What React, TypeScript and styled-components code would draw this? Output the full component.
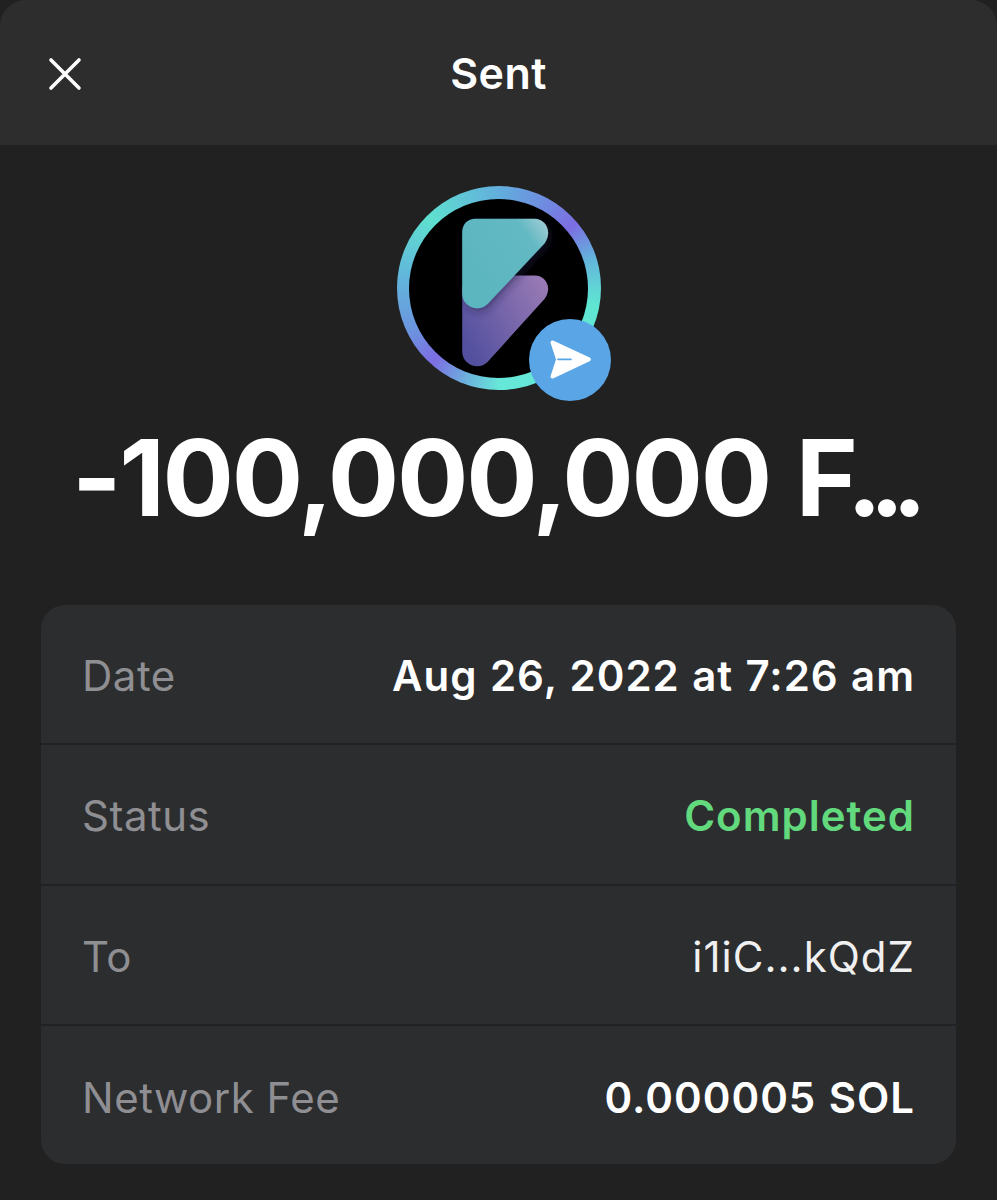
import React from 'react';
import styled, { createGlobalStyle } from 'styled-components';

const rows = [
  { label: 'Date', value: 'Aug 26, 2022 at 7:26 am', tone: 'white' },
  { label: 'Status', value: 'Completed', tone: 'green' },
  { label: 'To', value: 'i1iC...kQdZ', tone: 'plain' },
  { label: 'Network Fee', value: '0.000005 SOL', tone: 'white' },
];

const App: React.FC = () => {
  return (
    <>
      <GlobalStyle />
      <Page>
        <TopStrip />
        <Header>
          <CloseButton>
            <svg width="34" height="34" viewBox="0 0 34 34" fill="none">
              <path d="M3 3L31 31M31 3L3 31" stroke="#fff" strokeWidth="3.6" strokeLinecap="round" />
            </svg>
          </CloseButton>
          <Title>Sent</Title>
        </Header>
        <Body>
          <TokenIcon>
            <TokenRing>
              <TokenCore>
                <TokenMark />
              </TokenCore>
            </TokenRing>
            <SendBadge>
              <svg width="82" height="82" viewBox="0 0 82 82">
                <path
                  d="M21.6 24C21.2 22 22.8 21 24.6 21.8L60.6 38.6C62.4 39.5 62.4 41.5 60.6 42.3L24.6 59.2C22.8 60 21.2 59 21.6 57L27 40.4Z"
                  fill="#fff"
                />
                <path d="M29 40.4H42" stroke="#5aa5e6" strokeWidth="1.6" strokeLinecap="round" />
              </svg>
            </SendBadge>
          </TokenIcon>
          <Amount>
            -100,000,000 <TightLetter>F</TightLetter>
            <Dots>...</Dots>
          </Amount>
          <DetailCard>
            {rows.map((row) => (
              <DetailRow key={row.label}>
                <Label>{row.label}</Label>
                <Value $tone={row.tone}>{row.value}</Value>
              </DetailRow>
            ))}
          </DetailCard>
        </Body>
      </Page>
    </>
  );
};

// the F mark, coordinates measured from the icon box
const TokenMark = () => (
  <svg width="179" height="179" viewBox="12.5 12.5 179 179">
    <defs>
      <linearGradient id="blade" x1="0.2" y1="0.6" x2="1" y2="0">
        <stop offset="0" stopColor="#5cb6c0" />
        <stop offset="0.7" stopColor="#64b9c3" />
        <stop offset="1" stopColor="#a9d0d8" />
      </linearGradient>
      <linearGradient id="lower" x1="0" y1="0.7" x2="1" y2="0.1">
        <stop offset="0" stopColor="#53509f" />
        <stop offset="1" stopColor="#9a7bb5" />
      </linearGradient>
      <filter id="bladeShadow" x="-20%" y="-20%" width="140%" height="140%">
        <feDropShadow dx="2" dy="3" stdDeviation="4" floodColor="#1d1d4a" floodOpacity="0.55" />
      </filter>
    </defs>
    <path
      d="M65.7 100H90L105 89H138C150 89 156 102 148 112.5L91 175.5C83 184 65.7 179 65.7 165Z"
      fill="url(#lower)"
    />
    <path
      d="M65.7 46C65.7 38 71 32.3 79 32.3H138C150 32.3 156 46 148 57L91 117.5C83 126 65.7 121 65.7 107Z"
      fill="url(#blade)"
      filter="url(#bladeShadow)"
    />
  </svg>
);

const GlobalStyle = createGlobalStyle`
  html, body {
    margin: 0;
    background: #212121;
  }
  * {
    box-sizing: border-box;
  }
`;

const Page = styled.div`
  width: 997px;
  height: 1200px;
  overflow: hidden;
  display: flex;
  flex-direction: column;
  background: #212121;
  font-family: Inter, "Liberation Sans", sans-serif;
`;

const TopStrip = styled.div`
  position: absolute;
  top: 0;
  left: 20px;
  width: 957px;
  height: 2px;
  background: #262626;
`;

const Header = styled.header`
  position: relative;
  height: 145px;
  flex-shrink: 0;
  display: flex;
  align-items: center;
  justify-content: center;
  background: #2d2d2d;
  border-radius: 26px 26px 0 0;
`;

const CloseButton = styled.div`
  position: absolute;
  left: 48px;
  top: 57px;
  width: 34px;
  height: 34px;
  display: flex;
`;

const Title = styled.h1`
  margin: 0;
  font-size: 43px;
  font-weight: 600;
  letter-spacing: 0.4px;
  color: #fff;
`;

const Body = styled.main`
  flex: 1;
  display: flex;
  flex-direction: column;
  align-items: center;
  padding: 41px 41px 0;
`;

const TokenIcon = styled.div`
  position: relative;
  width: 204px;
  height: 204px;
  flex-shrink: 0;
`;

const TokenRing = styled.div`
  width: 100%;
  height: 100%;
  padding: 12.5px;
  border-radius: 50%;
  background: conic-gradient(
    #62aedd 0deg,
    #6f8ce0 28deg,
    #7c6de2 50deg,
    #64b4dc 72deg,
    #5fe6d2 100deg,
    #66e8d8 180deg,
    #6bb6dc 198deg,
    #7c6de2 222deg,
    #6b96de 245deg,
    #62b4dc 275deg,
    #5fe0cf 315deg,
    #62aedd 360deg
  );
`;

const TokenCore = styled.div`
  width: 179px;
  height: 179px;
  border-radius: 50%;
  background: #000;
  overflow: hidden;
`;

const SendBadge = styled.div`
  position: absolute;
  left: 132px;
  top: 133px;
  width: 82px;
  height: 82px;
  border-radius: 50%;
  background: #5aa5e6;
  display: flex;
`;

const Amount = styled.div`
  margin-top: 24px;
  font-size: 106px;
  line-height: 128px;
  font-weight: 700;
  color: #fff;
  white-space: nowrap;
  letter-spacing: -2.3px;
  word-spacing: 3px;
`;

const TightLetter = styled.span`
  letter-spacing: -11px;
`;

const Dots = styled.span`
  margin-right: 11px;
  letter-spacing: -13px;
`;

const DetailCard = styled.section`
  margin-top: 63px;
  width: 915px;
  height: 559px;
  background: #2c2d2f;
  border-radius: 24px;
  overflow: hidden;
`;

const DetailRow = styled.div`
  height: 140.3px;
  display: flex;
  align-items: center;
  justify-content: space-between;
  padding: 3px 41px 0 41px;
  border-bottom: 2px solid #212225;

  &:last-child {
    height: 138px;
    padding-top: 6px;
    border-bottom: none;
  }
`;

const Label = styled.span`
  font-size: 42px;
  letter-spacing: 0.5px;
  color: #8f8f93;
`;

const toneColors: Record<string, string> = {
  white: '#fff',
  green: '#63d97d',
  plain: '#f0f0f0',
};

const Value = styled.span<{ $tone: string }>`
  font-size: 42px;
  letter-spacing: 1px;
  word-spacing: 0.8px;
  font-weight: ${({ $tone }) => ($tone === 'plain' ? 400 : 600)};
  color: ${({ $tone }) => toneColors[$tone]};
`;

export default App;
